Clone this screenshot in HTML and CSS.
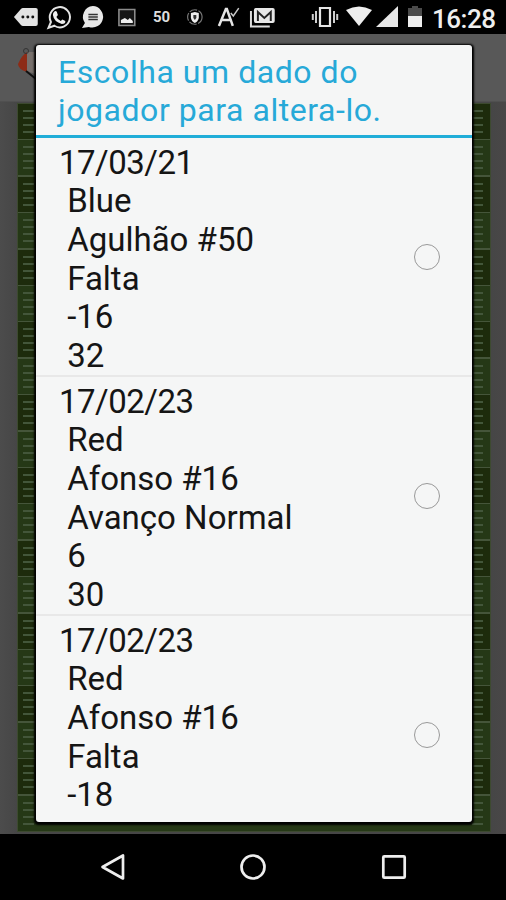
FILE: index.html
```
<!DOCTYPE html>
<html lang="pt">
<head>
<meta charset="utf-8">
<title>Jogador</title>
<link rel="stylesheet" href="styles.css">
</head>
<body>
<div class="phone">
  <header class="status">
    <div class="notices">
      <svg viewBox="-17 -17 34 34"><path fill="#e2e2e2" d="M-13 0-6-8Q-5-9-4-9H9Q11-9 11-7V7Q11 9 9 9H-4Q-5 9-6 8Z"/><g fill="#111"><circle cx="-4" r="1.5"/><circle cx="1" r="1.5"/><circle cx="6" r="1.5"/></g></svg>
      <svg viewBox="-15 -17 34 34"><path fill="none" stroke="#e4e4e4" stroke-width="2" d="M-10.500 11-8 5A10.200 10.200 0 1 1-4.500 8.800Z"/><path fill="#eee" d="M-5-5Q-3-7-2-5L-1-2-2.500 0Q-1 3 2 4L3.500 2.500 6.500 4Q7 7 3 7-5 5-6-2Q-6-4-5-5Z"/></svg>
      <svg viewBox="-16 -17 34 34"><path fill="#e8e8e8" d="M0-11A10.800 10.800 0 1 1-4 10L-11 11-8 6A10.800 10.800 0 0 1 0-11Z"/><path stroke="#333" stroke-width="1.600" d="M-4.500-2.500H5M-4.500 0H5M-4.500 2.500H5"/></svg>
      <svg viewBox="-16 -17 34 34"><path fill="#151515" stroke="#8b8b8b" stroke-width="1.600" d="M-8-7.500H8V8.500H-8Z"/><path fill="#eee" d="M-6 6V3L-2 1 1 3 3 1 6 4V6Z"/></svg>
      <span class="count">50</span>
      <svg viewBox="-17 -17 34 34"><circle r="7.300" fill="none" stroke="#777" stroke-width="1.200" stroke-dasharray="8 1.500"/><path fill="#eee" d="M-4-4 0-5 4-4V1Q3 5 0 6-3 5-4 1Z"/><path fill="#333" d="M-1.500-2H1.500V1L0 3-1.500 1Z"/></svg>
      <svg viewBox="-17 -17 34 34"><path fill="none" stroke="#e5e5e5" stroke-width="2.500" d="M-10 9-3-8H-2L4 9M-7 3H2"/><path fill="none" stroke="#c8c8c8" stroke-width="1.500" d="M2-4 4.500-1 10-9"/></svg>
      <svg viewBox="-17 -17 34 34"><path fill="none" stroke="#ddd" stroke-width="2" d="M-12-6V9.500H7"/><rect x="-9" y="-9" width="21" height="15" rx="2" fill="#e7e7e7"/><path fill="none" stroke="#222" stroke-width="2" d="M-5 4V-5L1.500 1 8-5V4"/></svg>
    </div>
    <div class="system">
      <svg class="vibrate" viewBox="0 0 28 24"><path fill="none" stroke="#e5e5e5" stroke-width="2.200" d="M9 3H19V21H9Z"/><path stroke="#cfcfcf" stroke-width="2" d="M5 6V18M23 6V18M1.800 9V15M26.200 9V15"/></svg>
      <svg class="wifi" viewBox="0 0 26 24"><path fill="#eee" d="M0 5Q13-2 26 5L13 21Z"/></svg>
      <svg class="signal" viewBox="0 0 22 24"><path fill="#e7e7e7" d="M0 22 22 1V22Z"/></svg>
      <svg class="battery" viewBox="0 0 16 24"><path fill="#4b4b4b" d="M1 3H5V1H11V3H15V12H1Z"/><path fill="#eee" d="M1 11H15V22H1Z"/></svg>
      <time>16:28</time>
    </div>
  </header>
  <main class="app">
    <div class="appbar"><svg viewBox="0 0 24 36"><path fill="#8d2b16" d="M9 5Q4 8 0 17 0 22 9 25Z"/><path fill="#77706c" d="M9 5H20V28L9 24Z"/><path fill="none" stroke="#111" stroke-width="2" d="M8 24 18 32"/><circle cx="8" cy="4" r="2.500" fill="none" stroke="#333"/></svg></div>
    <div class="ground"><div class="field"></div></div>
    <section class="dialog">
      <h1>Escolha um dado do<br>jogador para altera-lo.</h1>
      <div class="list">
        <div class="item"><p><span class="date">17/03/21</span>
 Blue
 Agulhão #50
 Falta
 -16
 32</p><i class="radio"></i></div>
        <div class="item"><p><span class="date">17/02/23</span>
 Red
 Afonso #16
 Avanço Normal
 6
 30</p><i class="radio"></i></div>
        <div class="item"><p><span class="date">17/02/23</span>
 Red
 Afonso #16
 Falta
 -18
</p><i class="radio"></i></div>
      </div>
    </section>
  </main>
  <nav>
    <svg viewBox="-15 -15 30 30"><path d="M-10.500 0 10-11.500V11.500Z"/></svg>
    <svg viewBox="-15 -15 30 30"><circle r="11.500"/></svg>
    <svg viewBox="-15 -15 30 30"><rect x="-10.700" y="-10.700" width="21.400" height="21.400" rx="1"/></svg>
  </nav>
</div>
</body>
</html>
```
FILE: styles.css
```
* { box-sizing: border-box; }
body { margin: 0; background: #000; font-family: Roboto, "Liberation Sans", sans-serif; }
.phone { width: 506px; height: 900px; display: flex; flex-direction: column; overflow: hidden; }
.status { height: 34px; flex: none; display: flex; justify-content: space-between; background: #000; color: #eee; padding: 0 11px 0 10px; }
.notices { display: flex; }
.notices > * { width: 33.7px; height: 34px; }
.count { font-size: 15px; line-height: 34px; text-align: center; font-weight: 700; color: #ddd; }
.system { display: flex; align-items: center; height: 34px; }
.system svg { height: 24px; flex: none; }
.vibrate { width: 28px; margin-right: 7px; }
.wifi { width: 26px; margin-right: 4px; }
.signal { width: 22px; margin-right: 9px; }
.battery { width: 16px; margin-right: 9px; }
time { font-size: 26px; font-weight: 500; line-height: 38px; padding-top: 4px; width: 63px; white-space: nowrap; letter-spacing: -0.5px; }
.app { height: 800px; flex: none; position: relative; display: flex; flex-direction: column; background: #494949; }
.appbar { height: 68px; flex: none; background: #585858; padding: 13px 0 0 18px; border-bottom: 1px solid #505050; }
.appbar svg { width: 24px; height: 36px; display: block; }
.ground { flex: 1; padding: 1px 15px 1px 17px; background: linear-gradient(90deg, #4c4c4c, #464646 17px, #464646 491px, #494747); }
.field {
  height: 729px;
  border: 1px solid #3d4a30;
  background:
    repeating-linear-gradient(180deg, transparent 0 35px, #45553a 35px 36.4px),
    repeating-linear-gradient(180deg, transparent 0 6px, #43563a 6px 8px, transparent 8px 13px, #43563a 13px 15px, transparent 15px 20px, #43563a 20px 22px, transparent 22px 27px, #43563a 27px 29px, transparent 29px 36.4px) 5px 0 / 11px 100% no-repeat,
    repeating-linear-gradient(180deg, transparent 0 6px, #43563a 6px 8px, transparent 8px 13px, #43563a 13px 15px, transparent 15px 20px, #43563a 20px 22px, transparent 22px 27px, #43563a 27px 29px, transparent 29px 36.4px) 454px 0 / 11px 100% no-repeat,
    repeating-linear-gradient(180deg, #1d2b0c 0 36.4px, #253816 36.4px 72.8px);
}
.dialog { position: absolute; left: 36px; top: 11px; width: 436px; height: 777px; overflow: hidden; display: flex; flex-direction: column; background: #f5f6f6; border-radius: 3px; box-shadow: 0 1px 2px 1.5px #000; }
h1 { margin: 0; height: 93px; flex: none; padding: 9px 0 0 22px; font-size: 32px; line-height: 37.5px; font-weight: 400; letter-spacing: 0.55px; color: #27a9d8; border-bottom: 3px solid #20add8; }
.item { height: 239px; display: flex; align-items: center; justify-content: space-between; padding: 0 32px 0 23px; border-bottom: 2px solid #e8e8e8; }
.item:last-child { border-bottom-color: transparent; }
.item p { margin: 0; height: 232px; padding-top: 3px; font-size: 33px; line-height: 38.7px; white-space: pre; color: #151515; }
.date { letter-spacing: -0.5px; }
.radio { width: 26px; height: 26px; border: 1.500px solid #999; border-radius: 50%; }
nav { height: 66px; flex: none; display: flex; justify-content: center; align-items: center; gap: 110.500px; background: #000; }
nav svg { width: 30px; height: 30px; fill: none; stroke: #eee; stroke-width: 2.700; stroke-linejoin: round; }
```
